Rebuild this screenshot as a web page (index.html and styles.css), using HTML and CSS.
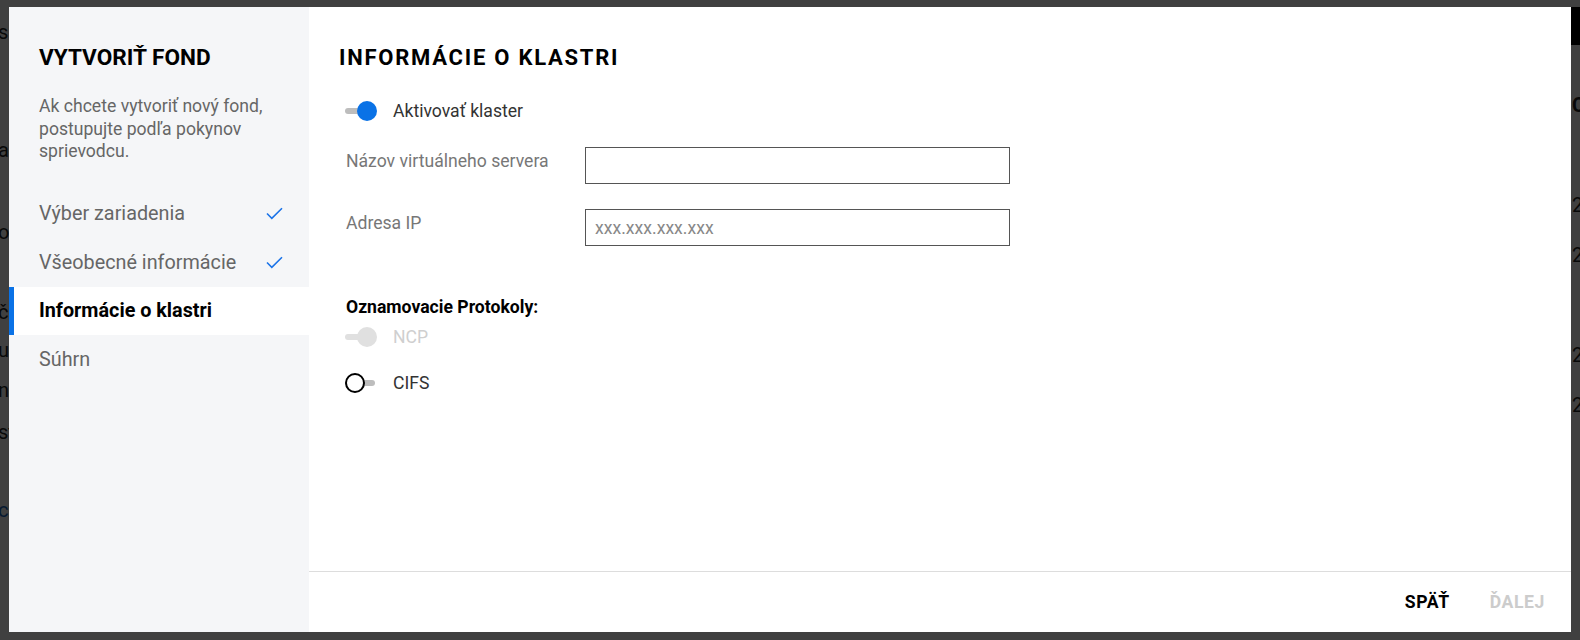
FILE: index.html
```html
<!DOCTYPE html>
<html lang="sk">

<head>
    <meta charset="UTF-8">
    <meta name="viewport" content="width=device-width, initial-scale=1.0">
    <title>Vytvoriť fond</title>
    <link rel="stylesheet" href="styles.css">
</head>

<body>
    <!-- page behind the dialog -->
    <div class="page">
        <div class="page-left">
            <span class="bg-line l1">s</span>
            <span class="bg-line l2">a</span>
            <span class="bg-line l3">o</span>
            <span class="bg-line l4">č</span>
            <span class="bg-line l5">u</span>
            <span class="bg-line l6">n</span>
            <span class="bg-line l7">st</span>
            <span class="bg-line l8 link">c</span>
        </div>
        <div class="page-right">
            <div class="page-bar"></div>
            <span class="bg-line r1 strong">C</span>
            <span class="bg-line r2">2</span>
            <span class="bg-line r3">2</span>
            <span class="bg-line r4">2</span>
            <span class="bg-line r5">2</span>
        </div>
    </div>
    <div class="backdrop"></div>

    <div class="modal">
        <aside class="wizard-side">
            <h2 class="side-title">VYTVORIŤ FOND</h2>
            <p class="side-desc">Ak chcete vytvoriť nový fond, postupujte podľa pokynov sprievodcu.</p>
            <ul class="steps">
                <li class="step done">
                    <span>Výber zariadenia</span>
                    <svg class="check" width="17" height="13" viewBox="0 0 17 13"><path d="M1 6.5 L5.8 11.3 L16 1.2" fill="none" stroke="#1a73e8" stroke-width="1.6"/></svg>
                </li>
                <li class="step done">
                    <span>Všeobecné informácie</span>
                    <svg class="check" width="17" height="13" viewBox="0 0 17 13"><path d="M1 6.5 L5.8 11.3 L16 1.2" fill="none" stroke="#1a73e8" stroke-width="1.6"/></svg>
                </li>
                <li class="step active"><span>Informácie o klastri</span></li>
                <li class="step"><span>Súhrn</span></li>
            </ul>
        </aside>

        <section class="wizard-main">
            <div class="wizard-body">
                <h2 class="main-title">INFORMÁCIE O KLASTRI</h2>

                <label class="toggle-row first">
                    <span class="toggle on"><span class="knob"></span></span>
                    <span class="toggle-label">Aktivovať klaster</span>
                </label>

                <div class="field">
                    <span class="field-label">Názov virtuálneho servera</span>
                    <input class="text-input" type="text">
                </div>
                <div class="field">
                    <span class="field-label">Adresa IP</span>
                    <input class="text-input" type="text" placeholder="xxx.xxx.xxx.xxx">
                </div>

                <div class="protocols">
                    <div class="protocols-title">Oznamovacie Protokoly:</div>
                    <label class="toggle-row disabled">
                        <span class="toggle on"><span class="knob"></span></span>
                        <span class="toggle-label">NCP</span>
                    </label>
                    <label class="toggle-row">
                        <span class="toggle off"><span class="knob"></span></span>
                        <span class="toggle-label">CIFS</span>
                    </label>
                </div>
            </div>

            <div class="wizard-footer">
                <button class="btn">SPÄŤ</button>
                <button class="btn" disabled>ĎALEJ</button>
            </div>
        </section>
    </div>
</body>

</html>
```

FILE: styles.css
```css
body {
    margin: 0;
    padding: 0;
    font-family: Roboto, "Noto Sans", Arial, sans-serif;
    background-color: #fff;
    overflow: hidden;
}

/* page behind */
.page {
    height: 640px;
    display: flex;
    justify-content: space-between;
    font-size: 20px;
    color: #222;
}

.page-left {
    width: 12px;
    position: relative;
}

.page-right {
    width: 9px;
    position: relative;
}

.bg-line {
    position: absolute;
    left: -2px;
    line-height: 20px;
}

.page-right .bg-line {
    left: 1px;
}

.l1 { top: 22px; }
.l2 { top: 140px; }
.l3 { top: 222px; }
.l4 { top: 302px; }
.l5 { top: 340px; }
.l6 { top: 380px; }
.l7 { top: 422px; }
.l8 { top: 500px; }

.r1 { top: 95px; }
.r2 { top: 195px; }
.r3 { top: 245px; }
.r4 { top: 345px; }
.r5 { top: 395px; }

.link {
    color: #1565c0;
}

.strong {
    font-weight: bold;
}

.page-bar {
    position: absolute;
    top: 7px;
    left: 0;
    width: 9px;
    height: 38px;
    background: #000;
    z-index: 1;
}

.backdrop {
    position: fixed;
    inset: 0;
    background: rgba(0, 0, 0, 0.75);
}

/* dialog */
.modal {
    position: fixed;
    top: 7px;
    left: 9px;
    right: 9px;
    bottom: 8px;
    display: flex;
    background: #fff;
    z-index: 2;
}

.wizard-side {
    width: 300px;
    flex-shrink: 0;
    background-color: #f5f6f8;
    padding-top: 38px;
}

.side-title {
    margin: 0 30px;
    font-size: 22.6px;
    line-height: 26px;
    font-weight: bold;
    color: #000;
}

.side-desc {
    margin: 24px 30px 0;
    font-size: 17.6px;
    line-height: 22.5px;
    color: #666;
}

.steps {
    list-style: none;
    margin: 27px 0 0;
    padding: 0;
}

.step {
    height: 48.5px;
    display: flex;
    align-items: center;
    justify-content: space-between;
    padding: 0 26px 0 30px;
    font-size: 19.8px;
    color: #666;
}

.step.active {
    background: #fff;
    color: #000;
    font-weight: bold;
    border-left: 5px solid #0a72e6;
    padding-left: 25px;
}

.wizard-main {
    flex: 1;
    display: flex;
    flex-direction: column;
}

.wizard-body {
    flex: 1;
    padding: 38px 0 0 30px;
}

.main-title {
    margin: 0;
    font-size: 22px;
    line-height: 26px;
    font-weight: bold;
    letter-spacing: 1.75px;
    color: #000;
}

.toggle-row {
    display: flex;
    align-items: center;
    height: 24px;
    margin-left: 6px;
    font-size: 17.6px;
    color: #333;
}

.toggle-row.first {
    margin-top: 28px;
    margin-bottom: 24px;
}

.toggle {
    position: relative;
    width: 32px;
    height: 20px;
    margin-right: 16px;
}

.toggle::before {
    content: "";
    position: absolute;
    left: 0;
    right: 2px;
    top: 7px;
    height: 6px;
    border-radius: 3px;
    background: #bdbdbd;
}

.knob {
    position: absolute;
    top: 0;
    width: 20px;
    height: 20px;
    border-radius: 50%;
    box-sizing: border-box;
}

.toggle.on .knob {
    left: 12px;
    background: #0a72e6;
}

.toggle.off .knob {
    left: 0;
    background: #fff;
    border: 2px solid #000;
}

.toggle-row.disabled {
    color: #cfcfcf;
}

.toggle-row.disabled .toggle::before {
    background: #e0e0e0;
}

.toggle-row.disabled .knob {
    background: #e0e0e0;
}

.field {
    display: flex;
    align-items: flex-start;
    margin-left: 7px;
    margin-bottom: 25px;
}

.field-label {
    width: 239px;
    font-size: 17.6px;
    line-height: 24px;
    padding-top: 2px;
    color: #777;
}

.text-input {
    width: 425px;
    height: 37px;
    box-sizing: border-box;
    border: 1px solid #555;
    padding: 0 9px;
    font-family: inherit;
    font-size: 17.6px;
    color: #333;
    outline: none;
}

.text-input::placeholder {
    color: #888;
}

.protocols {
    margin-top: 49px;
}

.protocols-title {
    margin-left: 7px;
    font-size: 17.6px;
    line-height: 24px;
    font-weight: bold;
    color: #000;
    margin-bottom: 6px;
}

.protocols .toggle-row {
    margin-bottom: 22px;
}

.wizard-footer {
    height: 60px;
    border-top: 1px solid #ddd;
    display: flex;
    justify-content: flex-end;
    align-items: center;
    padding-right: 6px;
}

.btn {
    background: none;
    border: none;
    padding: 6px 20px;
    font-family: inherit;
    font-size: 17.6px;
    font-weight: bold;
    letter-spacing: 0.6px;
    color: #000;
    cursor: pointer;
}

.btn:disabled {
    color: #ccc;
    cursor: default;
}
```
